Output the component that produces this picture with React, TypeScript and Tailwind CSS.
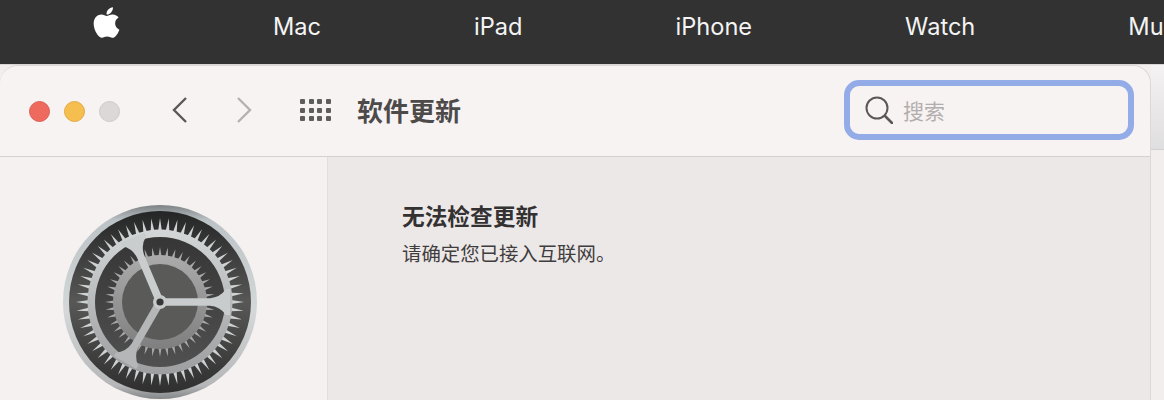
import { FaApple } from "react-icons/fa";

const cjk = "font-['Noto_Sans_CJK_SC','Noto_Sans',sans-serif]";

const navItems = ["Mac", "iPad", "iPhone", "Watch", "Mu"];

// tooth wedges around a circle, used for both gear rings
function Teeth({ count, inner, outer, width, fill }: { count: number; inner: number; outer: number; width: number; fill: string }) {
  const teeth = [];
  for (let i = 0; i < count; i++) {
    teeth.push(
      <polygon
        key={i}
        points={`${-width},${-inner} 0,${-outer} ${width},${-inner}`}
        fill={fill}
        transform={`rotate(${(i * 360) / count})`}
      />
    );
  }
  return <g>{teeth}</g>;
}

// spoke drawn pointing right, rotated into place; flares where it meets the ring
function Spoke({ angle, fill }: { angle: number; fill: string }) {
  return (
    <path
      d="M0 -3.8 L50 -3.8 Q60 -4.5 66 -13 L70 -13 L70 13 L66 13 Q60 4.5 50 3.8 L0 3.8 Z"
      fill={fill}
      transform={`rotate(${angle})`}
    />
  );
}

function GearIcon() {
  return (
    <svg width="200" height="200" viewBox="-100 -100 200 200">
      <defs>
        <linearGradient id="rim" x1="0" y1="0" x2="0" y2="1">
          <stop offset="0" stopColor="#7d8284" />
          <stop offset="0.08" stopColor="#bcc3c6" />
          <stop offset="0.55" stopColor="#d4d8d9" />
          <stop offset="0.93" stopColor="#b5b6b7" />
          <stop offset="1" stopColor="#858687" />
        </linearGradient>
        <linearGradient id="well" x1="0" y1="0" x2="0" y2="1">
          <stop offset="0" stopColor="#242525" />
          <stop offset="0.5" stopColor="#575756" />
          <stop offset="1" stopColor="#2f2f2f" />
        </linearGradient>
        <linearGradient id="metal" x1="0" y1="0" x2="0" y2="1">
          <stop offset="0" stopColor="#d3d7d8" />
          <stop offset="1" stopColor="#9d9e9f" />
        </linearGradient>
        <linearGradient id="recess" x1="0" y1="0" x2="0" y2="1">
          <stop offset="0" stopColor="#363636" />
          <stop offset="1" stopColor="#505050" />
        </linearGradient>
        <linearGradient id="inner" x1="0" y1="0" x2="0" y2="1">
          <stop offset="0" stopColor="#ababab" />
          <stop offset="1" stopColor="#7f7f7f" />
        </linearGradient>
      </defs>
      <circle r="97" fill="url(#rim)" />
      <circle r="91" fill="url(#well)" />
      <Teeth count={60} inner={71} outer={84} width={1.9} fill="#cfd2d2" />
      <circle r="72.5" fill="url(#metal)" />
      <circle r="65" fill="url(#recess)" />
      <Teeth count={44} inner={46} outer={55} width={1.5} fill="#a8a8a8" />
      <circle r="47" fill="url(#inner)" />
      <circle r="38" fill="#5a5a59" />
      <Spoke angle={0} fill="#c8cccd" />
      <Spoke angle={-113} fill="#c9cdce" />
      <Spoke angle={120} fill="#b4b6b7" />
      <circle r="7" fill="#c6cacb" />
      <circle r="3.6" fill="#363636" />
    </svg>
  );
}

export default function App() {
  return (
    <div className={`flex h-[400px] w-[1164px] flex-col overflow-hidden bg-[#f2eeee] ${cjk}`}>
      <header className="flex h-[65px] shrink-0 items-start gap-[153px] overflow-hidden border-b border-[#d9d6d6] bg-[#323232] pl-[93px] font-['Inter',sans-serif] text-[23.6px] text-[#f4f4f4]">
        <FaApple className="mt-[5px] h-[35px] w-[27px] shrink-0 text-white" />
        {navItems.map((item) => (
          <span key={item} className="mt-[12px] leading-[30px]">
            {item}
          </span>
        ))}
      </header>

      <div className="flex flex-1">
        <div className="flex w-[1151px] shrink-0 flex-col overflow-hidden rounded-t-[18px] border-r border-t border-[#dcd8d8] bg-[#f8f3f3]">
          <div className="flex h-[91px] shrink-0 items-center border-b border-[#d5d1d1] pl-[29px]">
            <span className="h-[21px] w-[21px] rounded-full border border-[#dc5f55] bg-[#ee6a5f]" />
            <span className="ml-[14px] h-[21px] w-[21px] rounded-full border border-[#e0aa45] bg-[#f6bd4f]" />
            <span className="ml-[14px] h-[21px] w-[21px] rounded-full border border-[#cfcaca] bg-[#dcd8d8]" />
            <svg className="ml-[50px] -mt-[2px]" width="20" height="28" viewBox="0 0 20 28" fill="none" stroke="#5b5858" strokeWidth="2.4">
              <path d="M16 2 4 14l12 12" />
            </svg>
            <svg className="ml-[44px] -mt-[2px]" width="20" height="28" viewBox="0 0 20 28" fill="none" stroke="#b5b1b1" strokeWidth="2.4">
              <path d="m4 2 12 12L4 26" />
            </svg>
            <div className="ml-[46px] -mt-[2px] grid w-[31px] grid-cols-4 gap-x-[3.6px] gap-y-[3.6px]">
              {Array.from({ length: 12 }, (_, i) => (
                <span key={i} className="h-[5px] w-[5px] rounded-[1px] bg-[#5f5c5c]" />
              ))}
            </div>
            <h1 className="ml-[26px] -mt-[3px] text-[26px] font-semibold leading-none text-[#4d4a4a]">软件更新</h1>
            <div className="ml-[383px] -mt-[2px] flex h-[60px] w-[290px] items-center rounded-[15px] border-[6px] border-[#93ace8] pl-[15px]">
              <svg width="28" height="28" viewBox="0 0 28 28" fill="none" stroke="#5b5858">
                <circle cx="12" cy="12" r="10.5" strokeWidth="2" />
                <path d="m20 20 7 7" strokeWidth="2.6" strokeLinecap="round" />
              </svg>
              <span className="ml-[10px] mt-[1px] text-[21px] leading-none text-[#b3aeae]">搜索</span>
            </div>
          </div>

          <div className="flex flex-1">
            <aside className="w-[328px] shrink-0 border-r border-[#e2dede] bg-[#f6f1f1] pl-[60px] pt-[45px]">
              <GearIcon />
            </aside>
            <main className="flex-1 bg-[#ede8e8] pl-[74px] pt-[44px] text-[#333131]">
              <h2 className="text-[22.7px] font-semibold leading-[30px]">无法检查更新</h2>
              <p className="mt-[10px] text-[19.4px] leading-[24px] text-[#3f3d3d]">请确定您已接入互联网。</p>
            </main>
          </div>
        </div>

        {/* bit of the page showing past the window */}
        <div className="flex-1">
          <div className="h-[85px] border-b border-[#d2d0d0] bg-gradient-to-b from-[#f4f2f2] to-[#e0dfdf]" />
        </div>
      </div>
    </div>
  );
}
